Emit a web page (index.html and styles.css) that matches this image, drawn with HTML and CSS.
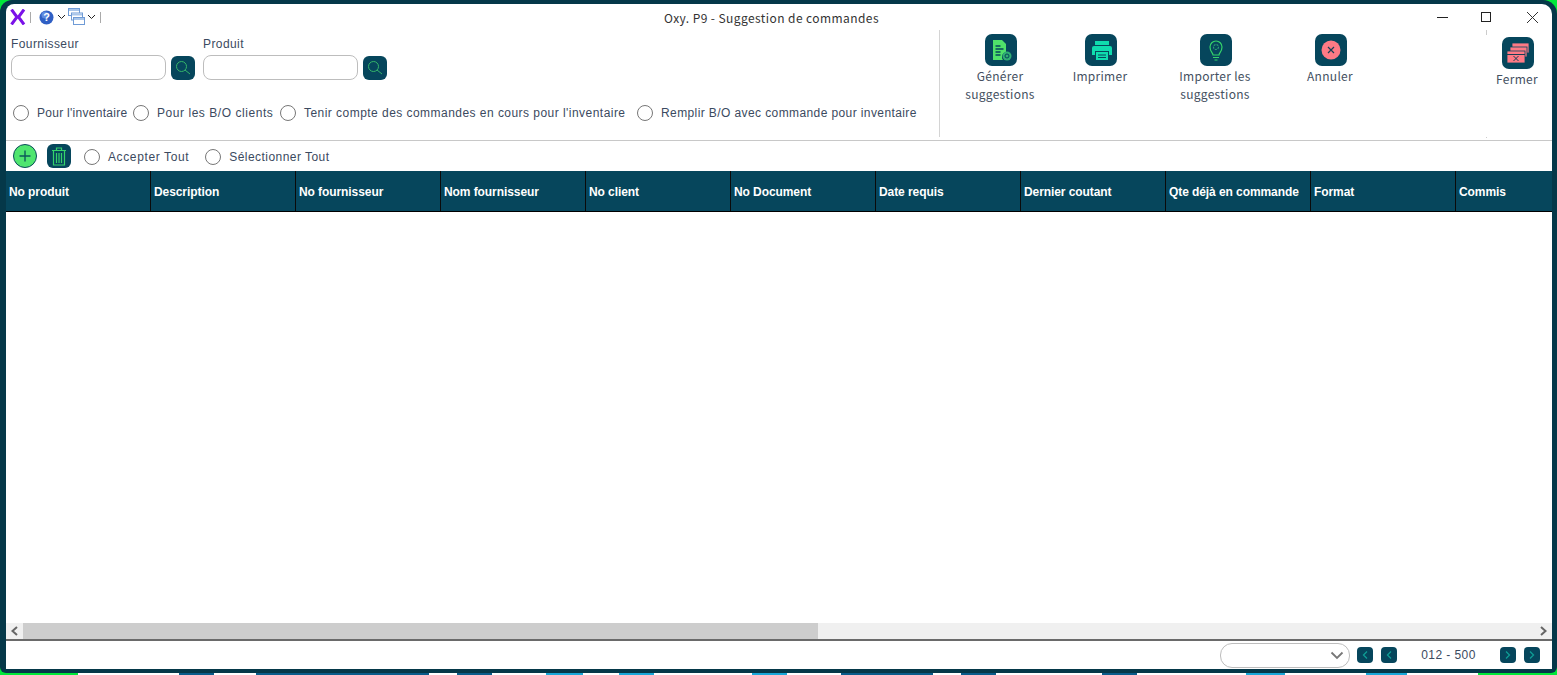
FILE: index.html
```html
<!DOCTYPE html>
<html lang="fr">
<head>
<meta charset="utf-8">
<title>Oxy. P9 - Suggestion de commandes</title>
<link rel="stylesheet" href="styles.css">
</head>
<body>
<div class="desktop">
  <div class="window">
    <div class="panel">
      <header class="titlebar">
        <div class="quick">
          <svg class="logo" width="18" height="16" viewBox="0 0 18 16"><path d="M2.500 .5L8 8l-5.500 7.500M15 .5L9.500 8 15 15.500" fill="none" stroke="#7a12e8" stroke-width="3"/></svg>
          <span class="sep"></span>
          <svg class="help" width="15" height="15" viewBox="0 0 15 15"><circle cx="7.5" cy="7.5" r="7" fill="#2f5fc4"/><circle cx="6" cy="5" r="3.5" fill="#5f8ae0"/><text x="7.5" y="11.2" class="qmark">?</text></svg>
          <svg class="chev" width="9" height="6" viewBox="0 0 9 6"><path d="M1 1l3.5 3.5L8 1" fill="none" stroke="#222"/></svg>
          <svg class="wins" width="17" height="17" viewBox="0 0 17 17"><g fill="#fff" stroke="#6f9bd6"><rect x=".5" y=".5" width="11" height="7"/><rect x="3.5" y="5" width="11" height="7"/><rect x="5.5" y="9.5" width="11" height="7"/></g><g fill="#a9c6ea"><rect x="1" y="1" width="10" height="2"/><rect x="4" y="5.500" width="10" height="2"/><rect x="6" y="10" width="10" height="2"/></g></svg>
          <svg class="chev" width="9" height="6" viewBox="0 0 9 6"><path d="M1 1l3.5 3.5L8 1" fill="none" stroke="#222"/></svg>
          <span class="sep"></span>
        </div>
        <div class="title">Oxy. P9 - Suggestion de commandes</div>
        <div class="winctl">
          <svg width="11" height="11" viewBox="0 0 11 11"><path d="M0 5.500h11" stroke="#222"/></svg>
          <svg width="11" height="11" viewBox="0 0 11 11"><rect x=".5" y=".5" width="9" height="9" fill="none" stroke="#222"/></svg>
          <svg width="13" height="13" viewBox="0 0 13 13"><path d="M1 1l11 11M12 1L1 12" stroke="#333"/></svg>
        </div>
      </header>

      <section class="ribbon">
        <div class="filters">
          <div class="fields">
            <div class="field">
              <label class="lbl">Fournisseur</label>
              <div class="inputrow">
                <span class="input"></span>
                <span class="sqbtn"><svg width="18" height="18" viewBox="0 0 18 18"><circle cx="7.500" cy="7.500" r="5" fill="none" stroke="#35b56a"/><path d="M11 11l5 4" stroke="#35b56a"/></svg></span>
              </div>
            </div>
            <div class="field">
              <label class="lbl">Produit</label>
              <div class="inputrow">
                <span class="input"></span>
                <span class="sqbtn"><svg width="18" height="18" viewBox="0 0 18 18"><circle cx="7.500" cy="7.500" r="5" fill="none" stroke="#35b56a"/><path d="M11 11l5 4" stroke="#35b56a"/></svg></span>
              </div>
            </div>
          </div>
          <div class="radios">
            <label class="radio r1"><i></i>Pour l'inventaire</label>
            <label class="radio r2"><i></i>Pour les B/O clients</label>
            <label class="radio r3"><i></i>Tenir compte des commandes en cours pour l'inventaire</label>
            <label class="radio"><i></i>Remplir B/O avec commande pour inventaire</label>
          </div>
        </div>
        <div class="actions">
          <div class="action a1">
            <span class="tile"><svg width="24" height="24" viewBox="0 0 24 24"><path d="M4 2h9l4 4v8a5 5 0 0 0-3 8H4z" fill="#4fe06a"/><path d="M6.500 8h5M6.500 11h8M6.500 14h5M6.500 17h5" stroke="#06465c" stroke-width="1.300"/><circle cx="18" cy="18" r="4.500" fill="#2fae72"/><circle cx="18" cy="18" r="2" fill="none" stroke="#06465c"/></svg></span>
            <span class="cap">Générer<br>suggestions</span>
          </div>
          <div class="action a2">
            <span class="tile"><svg width="24" height="24" viewBox="0 0 24 24"><g fill="#0fdcae"><rect x="6" y="3" width="14" height="4"/><path d="M3 10a2 2 0 0 1 2-2h16a2 2 0 0 1 2 2v7h-3v-4H6v4H3z"/><rect x="7" y="14" width="12" height="8"/></g><path d="M9 17h8M9 19.500h8" stroke="#06465c"/></svg></span>
            <span class="cap">Imprimer</span>
          </div>
          <div class="action a3">
            <span class="tile"><svg width="24" height="24" viewBox="0 0 24 24"><g fill="none" stroke="#35d36a" stroke-width="1.200"><path d="M9 17c0-2-3-3.500-3-8a6 6 0 0 1 12 0c0 4.500-3 6-3 8z"/><path d="M9 19.500h6M10.500 22h3"/><circle cx="12" cy="9" r="2.500" stroke="#2a9c74" stroke-dasharray="2 1"/></g></svg></span>
            <span class="cap">Importer les<br>suggestions</span>
          </div>
          <div class="action a4">
            <span class="tile"><svg width="24" height="24" viewBox="0 0 24 24"><circle cx="12" cy="12" r="9.500" fill="#ff7a85"/><path d="M9 9l6 6M15 9l-6 6" stroke="#173f55" stroke-width="1.200"/></svg></span>
            <span class="cap">Annuler</span>
          </div>
          <div class="action a5">
            <span class="tile"><svg width="24" height="24" viewBox="0 0 24 24"><g fill="#ff7a85" stroke="#06465c" stroke-width=".8"><rect x="6" y="2" width="17" height="10"/><rect x="4" y="6" width="17" height="10"/><rect x="1" y="10" width="18" height="12"/></g><path d="M1 13.500h18M7.500 15l5 5M12.500 15l-5 5" stroke="#173f55"/></svg></span>
            <span class="cap">Fermer</span>
          </div>
        </div>
      </section>

      <div class="bar">
        <span class="addbtn"><svg width="24" height="24" viewBox="0 0 24 24"><path d="M12 6.500v11M6.500 12h11" stroke="#0e5a5a" stroke-width="1.400"/></svg></span>
        <span class="sqbtn trash"><svg width="18" height="20" viewBox="0 0 18 20"><g fill="none" stroke="#35d36a" stroke-width="1.200"><path d="M2 4.500h14M6.500 4V2h5v2M3.500 4.500V19h11V4.500M6.500 7v10M9 7v10M11.500 7v10"/></g></svg></span>
        <label class="radio wide w1"><i></i>Accepter Tout</label>
        <label class="radio wide"><i></i>Sélectionner Tout</label>
      </div>

      <div class="grid">
        <div class="ghead">
          <div>No produit</div><div>Description</div><div>No fournisseur</div><div>Nom fournisseur</div><div>No client</div><div>No Document</div><div>Date requis</div><div>Dernier coutant</div><div>Qte déjà en commande</div><div>Format</div><div>Commis</div>
        </div>
        <div class="gbody"></div>
        <div class="hscroll">
          <span class="sbtn"><svg width="9" height="10" viewBox="0 0 9 10"><path d="M7 1L2.500 5 7 9" fill="none" stroke="#666" stroke-width="2"/></svg></span>
          <div class="strack"><span class="sthumb"></span></div>
          <span class="sbtn"><svg width="9" height="10" viewBox="0 0 9 10"><path d="M2 1l4.500 4L2 9" fill="none" stroke="#666" stroke-width="2"/></svg></span>
        </div>
      </div>

      <footer class="pager">
        <span class="select"><svg width="14" height="9" viewBox="0 0 14 9"><path d="M1.500 1.500L7 7l5.500-5.500" fill="none" stroke="#777" stroke-width="1.800"/></svg></span>
        <span class="pbtn first"><svg width="6" height="8" viewBox="0 0 6 8"><path d="M5 .5L1.500 4 5 7.500" fill="none" stroke="#0f9d95" stroke-width="1.300"/></svg></span>
        <span class="pbtn"><svg width="6" height="8" viewBox="0 0 6 8"><path d="M5 .5L1.500 4 5 7.500" fill="none" stroke="#0f9d95" stroke-width="1.300"/></svg></span>
        <span class="range">012 - 500</span>
        <span class="pbtn"><svg width="6" height="8" viewBox="0 0 6 8"><path d="M1 .5L4.500 4 1 7.500" fill="none" stroke="#0f9d95" stroke-width="1.300"/></svg></span>
        <span class="pbtn"><svg width="6" height="8" viewBox="0 0 6 8"><path d="M1 .5L4.500 4 1 7.500" fill="none" stroke="#0f9d95" stroke-width="1.300"/></svg></span>
      </footer>
    </div>
  </div>
  <div class="taskstrip"></div>
</div>
</body>
</html>
```

FILE: styles.css
```css
* { box-sizing: border-box; }
html, body { margin: 0; height: 100%; overflow: hidden; }
body { font-family: "Liberation Sans", Arial, sans-serif; font-size: 12px; color: #3b4a60; }
.desktop { width: 1557px; height: 675px; background: #00e83a; display: flex; flex-direction: column; }
.window { height: 673px; padding: 4px 5px 4px 6px; background: #053849; border-radius: 12px 14px 6px 6px; flex: none; }
.panel { height: 100%; background: #fff; border-radius: 8px 10px 0 0; display: flex; flex-direction: column; overflow: hidden; }
.taskstrip {
  height: 2px; flex: none;
  background: linear-gradient(90deg,
    #00e83a 0 78px, #fff 78px 179px, #0a5c8a 179px 214px, #fff 214px 256px,
    #0a5c8a 256px 429px, #fff 429px 457px, #0a5c8a 457px 492px, #fff 492px 546px,
    #19a7d8 546px 583px, #fff 583px 619px, #19a7d8 619px 654px, #fff 654px 752px,
    #19a7d8 752px 787px, #fff 787px 841px, #0a5c8a 841px 933px, #fff 933px 961px,
    #0a5c8a 961px 996px, #fff 996px 1102px, #0a5c8a 1102px 1137px, #fff 1137px 1246px,
    #19a7d8 1246px 1285px, #fff 1285px 1366px, #19a7d8 1366px 1407px, #fff 1407px 1478px,
    #00e83a 1478px);
}

.titlebar { height: 26px; display: flex; align-items: center; flex: none; }
.quick { width: 110px; display: flex; align-items: center; padding-left: 3px; }
.logo { margin-right: 3px; }
.sep { width: 1px; height: 11px; background: #aaa; }
.help { margin: 0 3px 0 8px; }
.qmark { font: bold 11px "Liberation Sans", sans-serif; fill: #fff; text-anchor: middle; }
.chev { margin-right: 1px; }
.wins { margin: -2px 2px 0 1px; }
.quick .chev + .wins + .chev { margin-right: 4px; }
.title { flex: 1; text-align: center; font-family: "Noto Sans CJK KR", "Noto Sans", sans-serif; font-size: 12px; letter-spacing: .42px; color: #333; }
.winctl { width: 125px; display: flex; align-items: center; padding-left: 10px; gap: 33px; }
.winctl svg:last-child { margin-left: 1px; }

.ribbon { height: 111px; flex: none; border-bottom: 1px solid #c8c8c8; display: flex; }
.filters { width: 934px; height: 107px; padding: 7px 0 0 5px; border-right: 1px solid #d4d4d4; flex: none; }
.fields { display: flex; gap: 8px; }
.lbl { display: block; height: 18px; line-height: 15px; letter-spacing: .42px; }
.inputrow { display: flex; align-items: center; gap: 5px; }
.input { width: 155px; height: 25px; border: 1px solid #bdbdbd; border-radius: 8px; background: #fff; }
.sqbtn { width: 24px; height: 24px; border-radius: 6px; background: #06465c; display: inline-flex; align-items: center; justify-content: center; }
.radios { display: flex; margin-top: 25px; padding-left: 2px; }
.radio { display: inline-flex; align-items: center; letter-spacing: .4px; white-space: nowrap; line-height: 16px; }
.radio i { width: 16px; height: 16px; border: 1px solid #777; border-radius: 50%; margin-right: 8px; flex: none; background: #fff; }
.r1 { width: 120px; letter-spacing: .28px; }
.r2 { width: 147px; letter-spacing: .55px; }
.r3 { width: 357px; letter-spacing: .46px; }

.actions {
  flex: 1; display: flex; align-items: flex-start; padding-top: 4px;
  background:
    linear-gradient(#ccc, #ccc) 546px 0 / 1px 5px no-repeat,
    linear-gradient(#ccc, #ccc) 546px 107px / 1px 1px no-repeat;
}
.action { display: flex; flex-direction: column; align-items: center; flex: none; }
.tile { width: 32px; height: 32px; border-radius: 7px; background: #06465c; display: flex; align-items: center; justify-content: center; }
.cap { font-family: "Noto Sans CJK KR", "Noto Sans", sans-serif; font-size: 12px; line-height: 18px; letter-spacing: .28px; text-align: center; margin: 1px 2px 0 0; white-space: nowrap; color: #44505f; }
.a1 { width: 120px; margin-left: 1px; }
.a2 { width: 80px; }
.a3 { width: 120px; margin-left: 15px; }
.a4 { width: 80px; margin-left: 15px; }
.a5 { width: 60px; margin-left: 117px; padding-top: 3px; }

.bar { height: 30px; flex: none; display: flex; align-items: center; padding-left: 7px; }
.addbtn { width: 24px; height: 24px; border-radius: 50%; background: #4fe56f; border: 1px solid #0b4a5c; display: inline-flex; align-items: center; justify-content: center; }
.addbtn svg { margin: -1px; flex: none; }
.trash { margin-left: 10px; margin-right: 13px; }
.radio.wide { margin-top: 1px; letter-spacing: .46px; }
.radio.w1 { margin-right: 16px; letter-spacing: .62px; }

.grid { flex: 1; display: flex; flex-direction: column; min-height: 0; }
.ghead { height: 41px; flex: none; background: #06465c; border-bottom: 1px solid #000; display: grid; grid-template-columns: repeat(10, 145px) 1fr; }
.ghead div { color: #fff; font-weight: bold; font-size: 12px; letter-spacing: -.08px; border-right: 1px solid #0a0a0a; padding-left: 3px; line-height: 42px; height: 40px; white-space: nowrap; }
.ghead div:last-child { border-right: 0; }
.gbody { flex: 1; }
.hscroll { height: 16px; flex: none; display: flex; background: #f0f0f0; }
.sbtn { width: 17px; display: flex; align-items: center; justify-content: center; flex: none; }
.strack { flex: 1; }
.sthumb { display: block; width: 795px; height: 100%; background: #cdcdcd; }

.pager { height: 30px; flex: none; border-top: 2px solid #6a6a6a; display: flex; align-items: center; justify-content: flex-end; padding-right: 12px; }
.select { width: 130px; height: 25px; border: 1px solid #bdbdbd; border-radius: 12px; display: flex; align-items: center; justify-content: flex-end; padding-right: 5px; margin-right: 7px; }
.pbtn { width: 16px; height: 16px; border-radius: 4px; background: #06465c; display: inline-flex; align-items: center; justify-content: center; }
.first { margin-right: 8px; }
.range { width: 103px; text-align: center; letter-spacing: .42px; }
.pager .range + .pbtn { margin-right: 8px; }
```
